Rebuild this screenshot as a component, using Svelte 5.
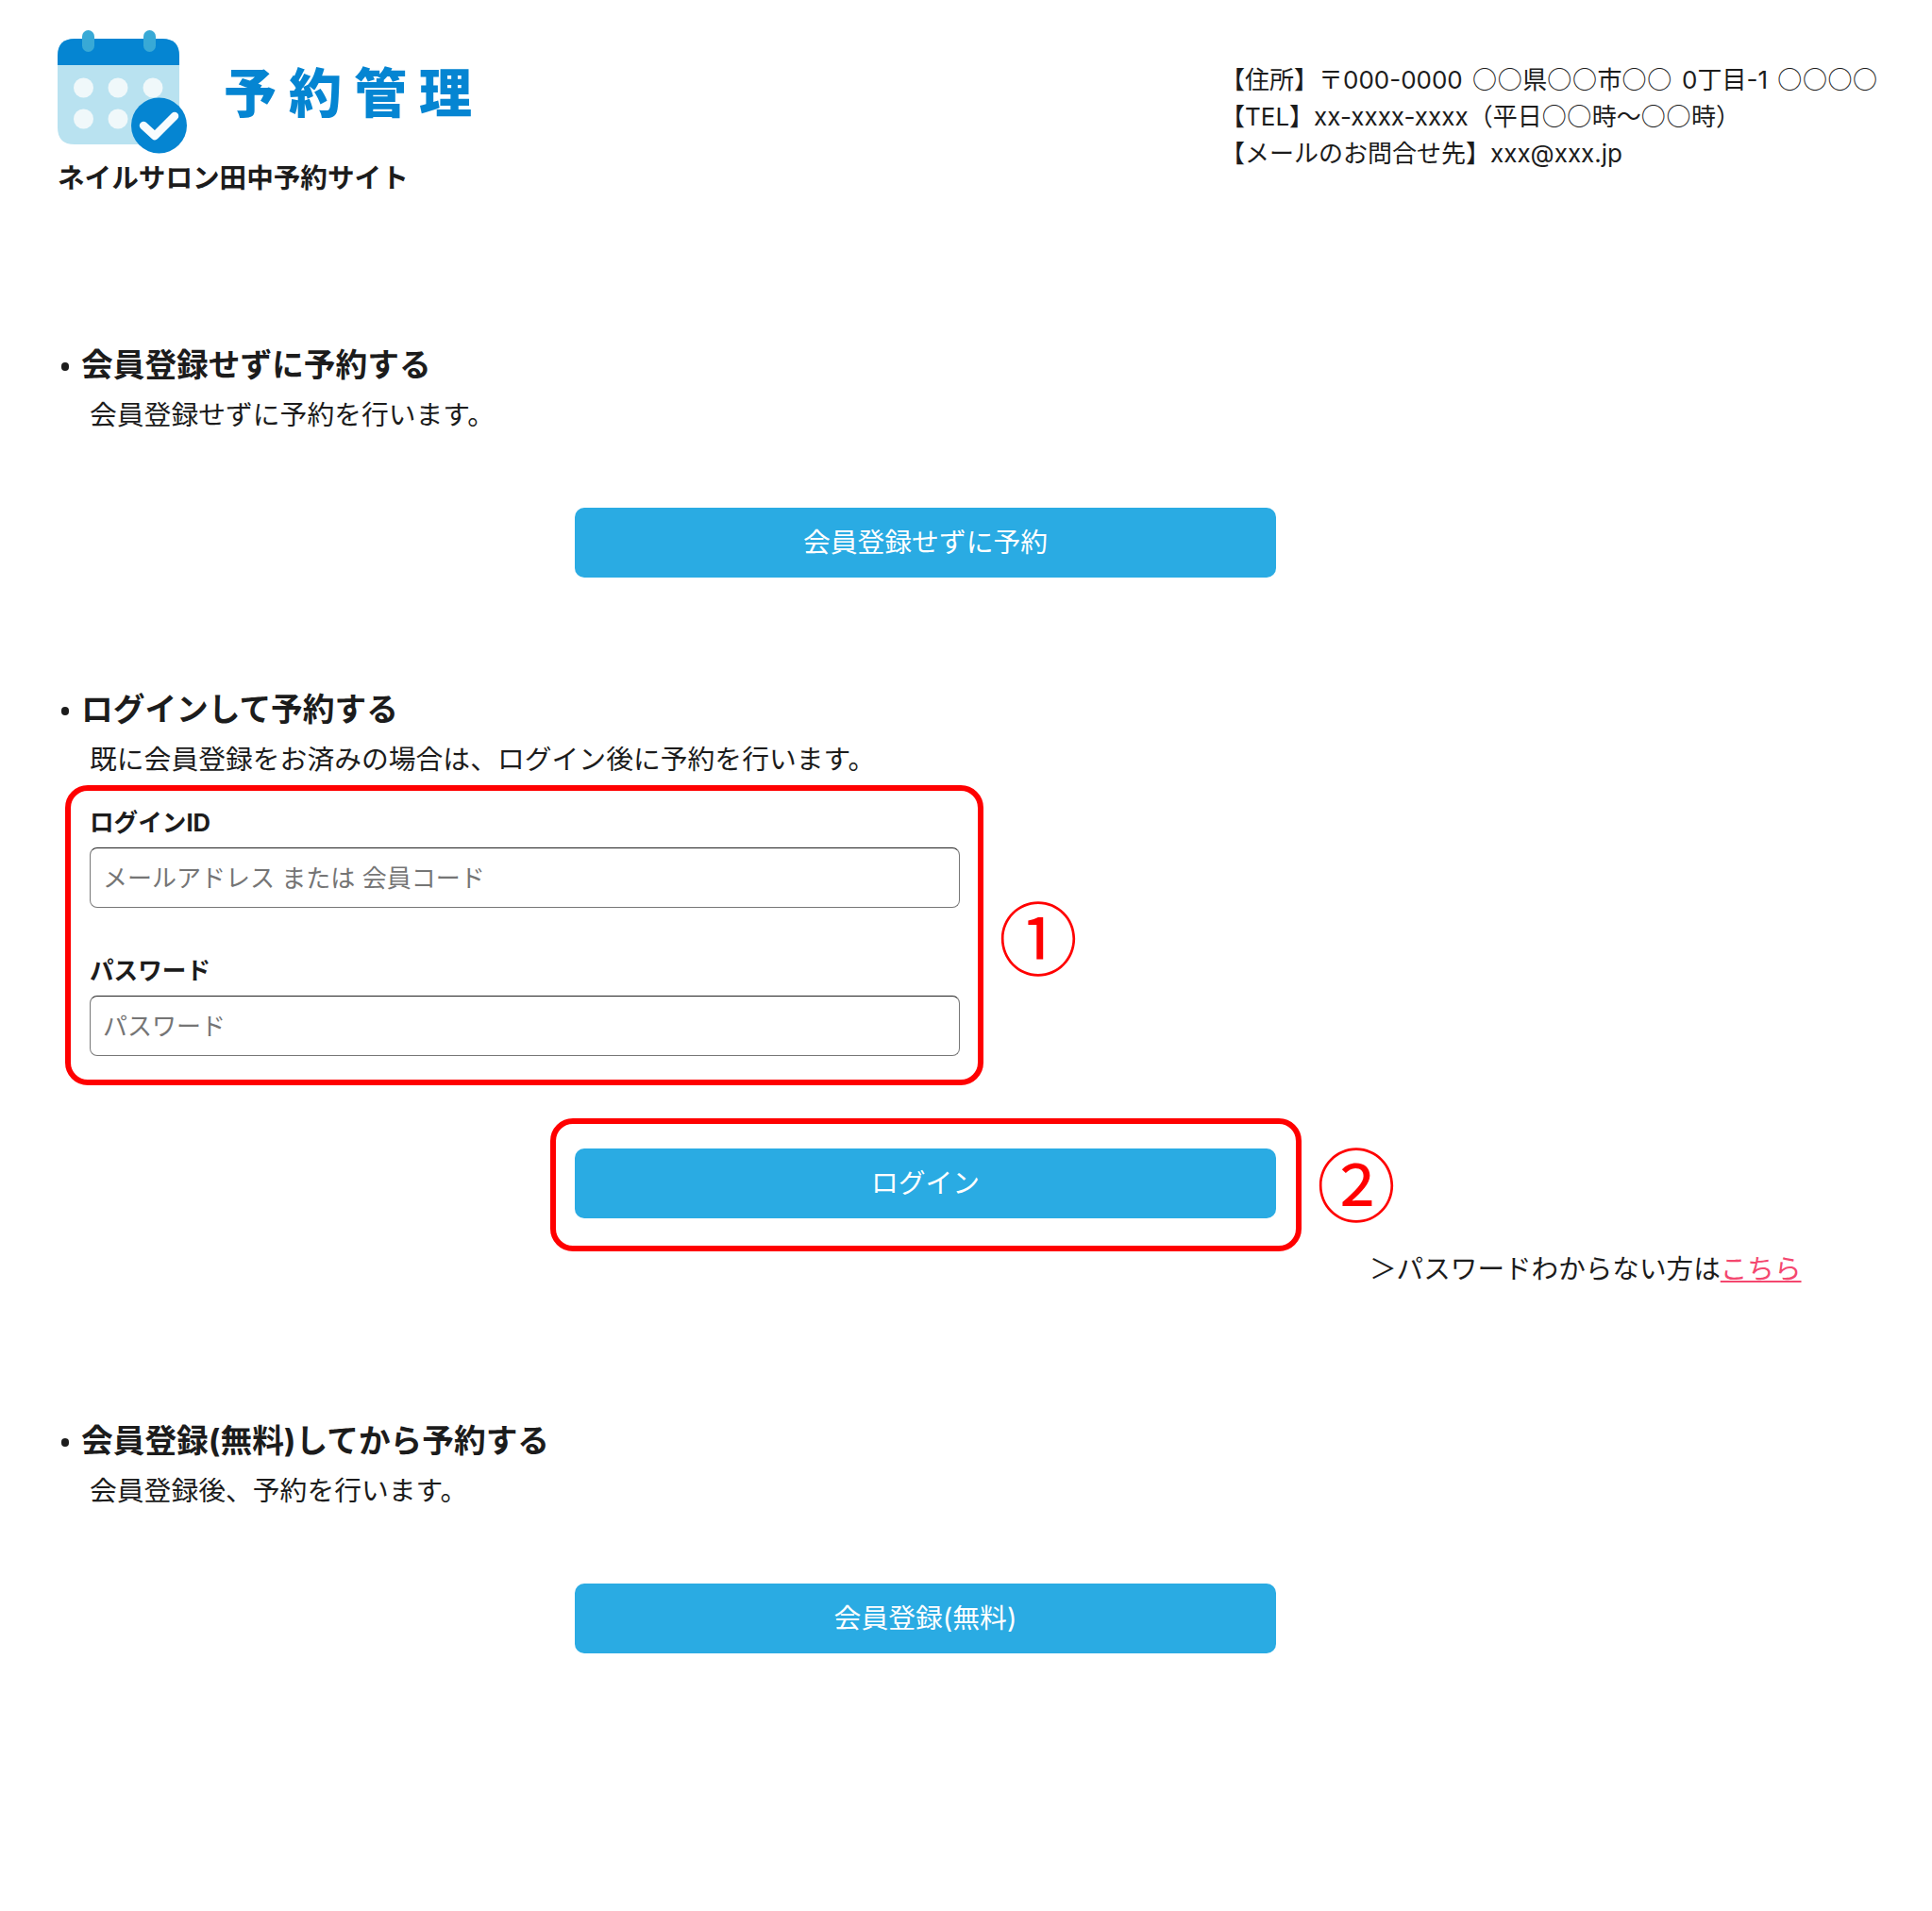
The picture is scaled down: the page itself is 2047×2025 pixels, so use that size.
<script lang="ts">
  const sections = {
    guest: { title: '会員登録せずに予約する', desc: '会員登録せずに予約を行います。', button: '会員登録せずに予約' },
    login: { title: 'ログインして予約する', desc: '既に会員登録をお済みの場合は、ログイン後に予約を行います。' },
    signup: { title: '会員登録(無料)してから予約する', desc: '会員登録後、予約を行います。', button: '会員登録(無料)' }
  };

  let loginId = $state('');
  let password = $state('');
</script>

<div class="page">
  <header class="header">
    <div class="brand">
      <div class="logo">
        <svg class="logo-icon" width="137" height="131" viewBox="0 0 137 131" aria-hidden="true">
          <path d="M0 27 Q0 9 18 9 H111 Q129 9 129 27 V100 Q129 121 108 121 H18 Q0 121 0 103 Z" fill="#b9e2f0" />
          <path d="M0 37 V27 Q0 9 18 9 H111 Q129 9 129 27 V37 Z" fill="#0585d2" />
          <rect x="26" y="0" width="13" height="23" rx="6.5" fill="#38a9d6" />
          <rect x="91" y="0" width="13" height="23" rx="6.5" fill="#38a9d6" />
          <circle cx="27.5" cy="61" r="10.5" fill="#f0f8fa" />
          <circle cx="64" cy="61" r="10.5" fill="#f0f8fa" />
          <circle cx="101" cy="61" r="10.5" fill="#f0f8fa" />
          <circle cx="27.5" cy="94" r="10.5" fill="#f0f8fa" />
          <circle cx="64" cy="94" r="10.5" fill="#f0f8fa" />
          <circle cx="107.500" cy="101" r="29.500" fill="#0585d2" />
          <path d="M91 101 L103 112 L124 91" fill="none" stroke="#f8fcfe" stroke-width="8.500" stroke-linecap="round" stroke-linejoin="round" />
        </svg>
        <span class="logo-title">予約管理</span>
      </div>
      <p class="site-name">ネイルサロン田中予約サイト</p>
    </div>
    <address class="contact">
      <div>【住所】〒000-0000 <span class="cjk">○○</span>県<span class="cjk">○○</span>市<span class="cjk">○○</span> 0丁目-1 <span class="cjk">○○○○</span></div>
      <div>【TEL】xx-xxxx-xxxx（平日<span class="cjk">○○</span>時〜<span class="cjk">○○</span>時）</div>
      <div>【メールのお問合せ先】xxx@xxx.jp</div>
    </address>
  </header>

  <section class="section first">
    <h2 class="section-title">{sections.guest.title}</h2>
    <p class="section-desc">{sections.guest.desc}</p>
    <div class="action">
      <button class="btn" type="button">{sections.guest.button}</button>
    </div>
  </section>

  <section class="section second">
    <h2 class="section-title">{sections.login.title}</h2>
    <p class="section-desc">{sections.login.desc}</p>

    <div class="form-row">
      <div class="marked form-box">
        <label class="field-label" for="login-id">ログインID</label>
        <input id="login-id" class="field-input" type="text" placeholder="メールアドレス または 会員コード" bind:value={loginId} />
        <label class="field-label second-label" for="login-pw">パスワード</label>
        <input id="login-pw" class="field-input" type="password" placeholder="パスワード" bind:value={password} />
      </div>
      <span class="step">①</span>
    </div>

    <div class="login-row">
      <div class="marked login-box">
        <button class="btn" type="button">ログイン</button>
      </div>
      <span class="step step-login">②</span>
    </div>

    <p class="forgot">＞パスワードわからない方は<a href="#top">こちら</a></p>
  </section>

  <section class="section third">
    <h2 class="section-title">{sections.signup.title}</h2>
    <p class="section-desc">{sections.signup.desc}</p>
    <div class="action">
      <button class="btn" type="button">{sections.signup.button}</button>
    </div>
  </section>
</div>

<style>
  :global(body) {
    margin: 0;
    background: #ffffff;
  }

  .page {
    box-sizing: border-box;
    min-height: 2025px;
    padding: 32px 60px 0 61px;
    color: #1c1c1c;
    font-family: Inter, "Noto Sans CJK JP", sans-serif;
  }

  .header {
    display: flex;
    justify-content: space-between;
  }

  .logo {
    display: flex;
    align-items: flex-start;
  }

  .logo-icon {
    display: block;
    flex: none;
  }

  .logo-title {
    margin: 32px 0 0 39px;
    color: #0585d2;
    font-family: "Noto Sans CJK JP", sans-serif;
    font-size: 56px;
    font-weight: 900;
    line-height: 62px;
    letter-spacing: 13px;
  }

  .site-name {
    margin: 6px 0 0 0;
    font-size: 28.600px;
    font-weight: 700;
    line-height: 40px;
  }

  .contact {
    width: 694px;
    padding-top: 33px;
    font-size: 26px;
    font-style: normal;
    line-height: 39px;
    white-space: nowrap;
    word-spacing: 3px;
  }

  .cjk {
    font-family: "Noto Sans CJK JP", sans-serif;
    line-height: 1;
    letter-spacing: 0.6px;
  }

  .section-title {
    position: relative;
    margin: 0;
    padding-left: 25px;
    font-size: 33.700px;
    font-weight: 700;
    line-height: 52px;
  }

  .section-title::before {
    content: '';
    position: absolute;
    left: 3.500px;
    top: 23px;
    width: 8.500px;
    height: 8.500px;
    border-radius: 50%;
    background: #1c1c1c;
  }

  .section-desc {
    margin: 5px 0 0 34px;
    font-size: 28.800px;
    line-height: 44px;
  }

  .first {
    margin-top: 152px;
  }

  .second {
    margin-top: 114px;
  }

  .third {
    margin-top: 136px;
  }

  .action {
    margin: 76px 0 0 548px;
  }

  .btn {
    display: block;
    box-sizing: border-box;
    width: 743px;
    height: 74px;
    padding: 0 0 5px;
    border: none;
    border-radius: 10px;
    background: #2aabe3;
    color: #ffffff;
    font-family: inherit;
    font-size: 28.800px;
    cursor: pointer;
  }

  .marked {
    box-sizing: border-box;
    border: 6px solid #ff0000;
    border-radius: 24px;
  }

  .form-row,
  .login-row {
    display: flex;
    align-items: center;
  }

  .form-row {
    margin: 5px 0 0 8px;
  }

  .form-box {
    display: flex;
    flex-direction: column;
    width: 973px;
    padding: 14px 19px 25px 20px;
  }

  .field-label {
    font-size: 25.600px;
    font-weight: 700;
    line-height: 40px;
  }

  .second-label {
    margin-top: 47px;
  }

  .field-input {
    box-sizing: border-box;
    width: 100%;
    height: 64px;
    margin-top: 6px;
    padding: 0 13px;
    border: 1px solid #777777;
    border-top-color: #222222;
    border-radius: 8px;
    background: #ffffff;
    font-family: inherit;
    font-size: 26px;
    outline: none;
  }

  .field-input::placeholder {
    color: #757575;
  }

  .step {
    margin-left: 16px;
    color: #ff0000;
    font-family: "Noto Sans CJK JP", sans-serif;
    font-size: 84px;
    line-height: 90px;
  }

  .step-login {
    margin-top: -8px;
  }

  .login-row {
    margin: 35px 0 0 522px;
  }

  .login-box {
    padding: 26px 19px 29px 20px;
    width: 796px;
  }

  .forgot {
    margin: -1px 0 0 1390px;
    font-size: 28.600px;
    line-height: 40px;
    white-space: nowrap;
  }

  .forgot a {
    color: #f4476f;
  }
</style>
